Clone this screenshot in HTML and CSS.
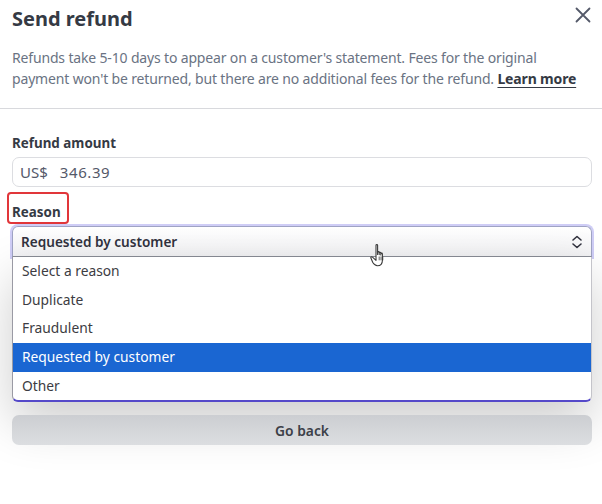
FILE: index.html
```html
<!DOCTYPE html>
<html lang="en">
<head>
    <meta charset="UTF-8">
    <meta name="viewport" content="width=device-width, initial-scale=1.0">
    <title>Send refund</title>
    <link rel="stylesheet" href="styles.css">
</head>
<body>
    <div class="modal">
        <!-- Header with title and close button -->
        <div class="head">
            <h1 class="title">Send refund</h1>
            <button class="close" aria-label="Close">
                <svg width="16" height="16" viewBox="0 0 16 16">
                    <path d="M1.5 1.5 L14.5 14.5 M14.5 1.5 L1.5 14.5" stroke="#545969" stroke-width="1.8" stroke-linecap="round"/>
                </svg>
            </button>
        </div>
        <p class="desc">
            Refunds take 5-10 days to appear on a customer's statement. Fees for the original<br>
            payment won't be returned, but there are no additional fees for the refund. <a href="#">Learn more</a>
        </p>

        <div class="divider"></div>

        <div class="form">
            <div class="field">
                <label class="label">Refund amount</label>
                <div class="input">
                    <span>US$</span>
                    <span class="amount">346.39</span>
                </div>
            </div>

            <div class="field field-reason">
                <label class="label label-marked">Reason</label>
                <div class="select">
                    <span>Requested by customer</span>
                    <svg width="12" height="14" viewBox="0 0 12 14">
                        <path d="M2 5 L6 1.5 L10 5 M2 9 L6 12.5 L10 9" fill="none" stroke="#30313d" stroke-width="1.6" stroke-linecap="round" stroke-linejoin="round"/>
                    </svg>
                </div>
                <ul class="options">
                    <li>Select a reason</li>
                    <li>Duplicate</li>
                    <li>Fraudulent</li>
                    <li class="active">Requested by customer</li>
                    <li>Other</li>
                </ul>
            </div>

            <button class="back">Go back</button>
        </div>

        <!-- Mouse pointer hovering the select -->
        <svg class="pointer" width="20" height="26" viewBox="0 0 20 26">
            <path d="M6 2.2c0-1 1.6-1 1.6 0v9.3V9.4c0-1 1.6-1 1.6 0v2.2-1.5c0-1 1.6-1 1.6 0v1.8-1c0-1 1.6-1 1.6 0v6.3c0 3-1.8 5.5-5 5.5-2.4 0-3.4-1.3-4.6-3.2L1 15.2c-.6-1 .6-1.9 1.5-1.1L6 17.3z" fill="#fff" stroke="#3a3a3a" stroke-width="1.1" stroke-linejoin="round"/>
            <path d="M9.2 13.5v3.8M11 13.5v3.8M12.8 13.5v3.8" stroke="#3a3a3a" stroke-width="0.8"/>
        </svg>
    </div>
</body>
</html>
```

FILE: styles.css
```css
/* Refund dialog */
body {
    margin: 0;
    background-color: #fff;
    font-family: "Noto Sans", "Open Sans", sans-serif;
    color: #30313d;
}

.modal {
    position: relative;
    width: 602px;
    height: 504px;
    overflow: hidden;
}

.head {
    display: flex;
    justify-content: space-between;
    align-items: flex-start;
    padding: 5px 11px 0 12px;
}

.title {
    margin: 0;
    font-size: 20px;
    font-weight: 700;
    line-height: 28px;
    color: #353a44;
}

.close {
    border: none;
    background: none;
    padding: 0;
    margin-top: 2px;
    cursor: pointer;
}

.desc {
    margin: 14px 12px 0 12px;
    font-size: 14px;
    letter-spacing: -0.16px;
    line-height: 21px;
    color: #6a7383;
}

.desc a {
    color: #353a44;
    font-weight: 700;
    text-decoration: underline;
    text-underline-offset: 3px;
}

.divider {
    margin-top: 19px;
    height: 1px;
    background-color: #d8d9dd;
}

.form {
    padding: 22px 10px 0 12px;
}

.field-reason {
    margin-top: 13px;
}

.label {
    display: inline-block;
    font-size: 13.4px;
    font-weight: 700;
    line-height: 20px;
    margin-bottom: 4px;
    color: #353a44;
}

/* red highlight around the Reason label */
.label-marked {
    position: relative;
}

.label-marked::after {
    content: "";
    position: absolute;
    left: -5px;
    top: -10px;
    right: -8px;
    bottom: -2px;
    border: 2px solid #e1363a;
    border-radius: 4px;
}

.input {
    display: flex;
    gap: 12px;
    align-items: center;
    height: 28px;
    padding: 0 7px;
    border: 1px solid #dcdde1;
    border-radius: 7px;
    font-size: 15px;
    color: #545969;
}

.amount {
    letter-spacing: 0.6px;
}

.select {
    display: flex;
    justify-content: space-between;
    align-items: center;
    height: 29px;
    padding: 0 8px 0 8px;
    border: 1px solid #9fa3c4;
    border-bottom-color: #8a8d96;
    border-radius: 6px 6px 0 0;
    background: linear-gradient(#fff, #f2f2f4);
    box-shadow: 0 0 0 2px #cfcdf6;
    font-size: 13.6px;
    font-weight: 600;
    color: #30313d;
}

.options {
    list-style: none;
    margin: 0;
    padding: 0;
    background: #fff;
    border-left: 1px solid #9a9aa4;
    border-right: 1px solid #c4c4ca;
    border-bottom: 2px solid #5549c9;
    border-radius: 0 0 6px 6px;
    box-shadow: 0 20px 50px rgba(0, 0, 0, 0.2);
}

.options li {
    height: 28.7px;
    line-height: 28.7px;
    padding-left: 9px;
    font-size: 13.8px;
    color: #3c3c42;
}

.options li.active {
    background-color: #1a66d2;
    color: #fff;
}

.back {
    display: block;
    width: 100%;
    height: 30px;
    margin-top: 13px;
    border: none;
    border-radius: 7px;
    background: linear-gradient(#ccced2, #dcdee1);
    font-family: inherit;
    font-size: 13.8px;
    font-weight: 600;
    color: #3c4048;
    cursor: pointer;
}

.pointer {
    position: absolute;
    left: 370px;
    top: 243px;
}
```
